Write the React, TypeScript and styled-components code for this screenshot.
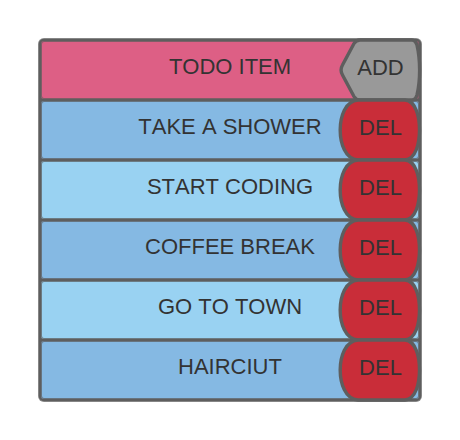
import React, { useState } from "react";
import styled, { createGlobalStyle } from "styled-components";

const LINE = "#5e5e5e";
const SOFT_LINE = "rgba(94, 94, 94, 0.75)";

const GlobalStyle = createGlobalStyle`
  *, *::before, *::after { box-sizing: border-box; }
  body {
    margin: 0;
    background: #ffffff;
    color: #333333;
    font-family: "Liberation Sans", Arial, sans-serif;
    font-size: 22px;
    line-height: 26px;
    font-kerning: none;
  }
`;

const Page = styled.main`
  padding: 39px;
`;

const Board = styled.form`
  border-radius: 5px;
  background: ${LINE};
  box-shadow: 0 0 0 1px ${SOFT_LINE};
`;

const List = styled.ul`
  margin: 0;
  padding: 0;
  list-style: none;
`;

const Row = styled.div<{ $fill: string }>`
  display: grid;
  align-items: center;
  min-height: 62px;
  border: 2px solid ${LINE};
  border-radius: 5px;
  background: ${(p) => p.$fill};
  box-shadow: inset 0 0 0 1px ${SOFT_LINE};
`;

const ItemRow = styled(Row)`
  margin-top: -2px;
`;

const ItemText = styled.span`
  grid-area: 1 / 1;
  padding-bottom: 6px;
  text-align: center;
`;

const ItemInput = styled.input`
  grid-area: 1 / 1;
  width: 100%;
  min-width: 0;
  border: 0;
  padding: 0 0 6px;
  background: transparent;
  color: inherit;
  font: inherit;
  font-kerning: none;
  text-align: center;
  outline: none;
`;

const ShapeButton = styled.button`
  grid-area: 1 / 1;
  justify-self: end;
  display: grid;
  align-items: center;
  width: 83px;
  height: 62px;
  margin: -2px;
  border: 0;
  padding: 0;
  background: transparent;
  color: inherit;
  font: inherit;
  cursor: pointer;
`;

const Shape = styled.svg`
  grid-area: 1 / 1;
  display: block;
  width: 83px;
  height: 62px;
  overflow: visible;
  stroke: ${LINE};
  stroke-width: 3.4;
  stroke-linejoin: round;
`;

const ButtonLabel = styled.span`
  grid-area: 1 / 1;
  padding: 0 0 4px 2px;
  text-align: center;
`;

function AddButton() {
  return (
    <ShapeButton type="submit">
      <Shape viewBox="0 0 83 62" aria-hidden="true">
        <path
          fill="#999999"
          d="M22 1 H74 C77 1 78 3 79 6 C82.500 21 82.500 41 79 56 C78 59 77 61 74 61 H22 C19 61 17.500 60 16 57.500 L4.500 36 C2.500 32.500 2.500 29.500 4.500 26 L16 4.500 C17.500 2 19 1 22 1 Z"
        />
      </Shape>
      <ButtonLabel>ADD</ButtonLabel>
    </ShapeButton>
  );
}

function DeleteButton({ onClick }: { onClick: () => void }) {
  return (
    <ShapeButton type="button" onClick={onClick}>
      <Shape viewBox="0 0 83 62" aria-hidden="true">
        <path
          fill="#c92d39"
          d="M20 1 H67 C78 2 81.500 18 81.500 31 C81.500 44 78 60 67 61 H20 C7 60 2.200 44 2.200 31 C2.200 18 7 2 20 1 Z"
        />
      </Shape>
      <ButtonLabel>DEL</ButtonLabel>
    </ShapeButton>
  );
}

export default function App() {
  const [draft, setDraft] = useState("TODO ITEM");
  const [items, setItems] = useState([
    "TAKE A SHOWER",
    "START CODING",
    "COFFEE BREAK",
    "GO TO TOWN",
    "HAIRCIUT",
  ]);

  const add = (event: React.FormEvent) => {
    event.preventDefault();
    if (draft.trim()) setItems([...items, draft.trim().toUpperCase()]);
    setDraft("");
  };

  return (
    <>
      <GlobalStyle />
      <Page>
        <Board onSubmit={add}>
          <Row $fill="#dd5f85">
            <ItemInput
              aria-label="Todo item"
              value={draft}
              onChange={(event) => setDraft(event.target.value)}
            />
            <AddButton />
          </Row>
          <List>
            {items.map((item, index) => (
              <ItemRow
                as="li"
                key={`${item}-${index}`}
                $fill={index % 2 === 0 ? "#85b9e3" : "#99d2f2"}
              >
                <ItemText>{item}</ItemText>
                <DeleteButton
                  onClick={() => setItems(items.filter((_, i) => i !== index))}
                />
              </ItemRow>
            ))}
          </List>
        </Board>
      </Page>
    </>
  );
}
